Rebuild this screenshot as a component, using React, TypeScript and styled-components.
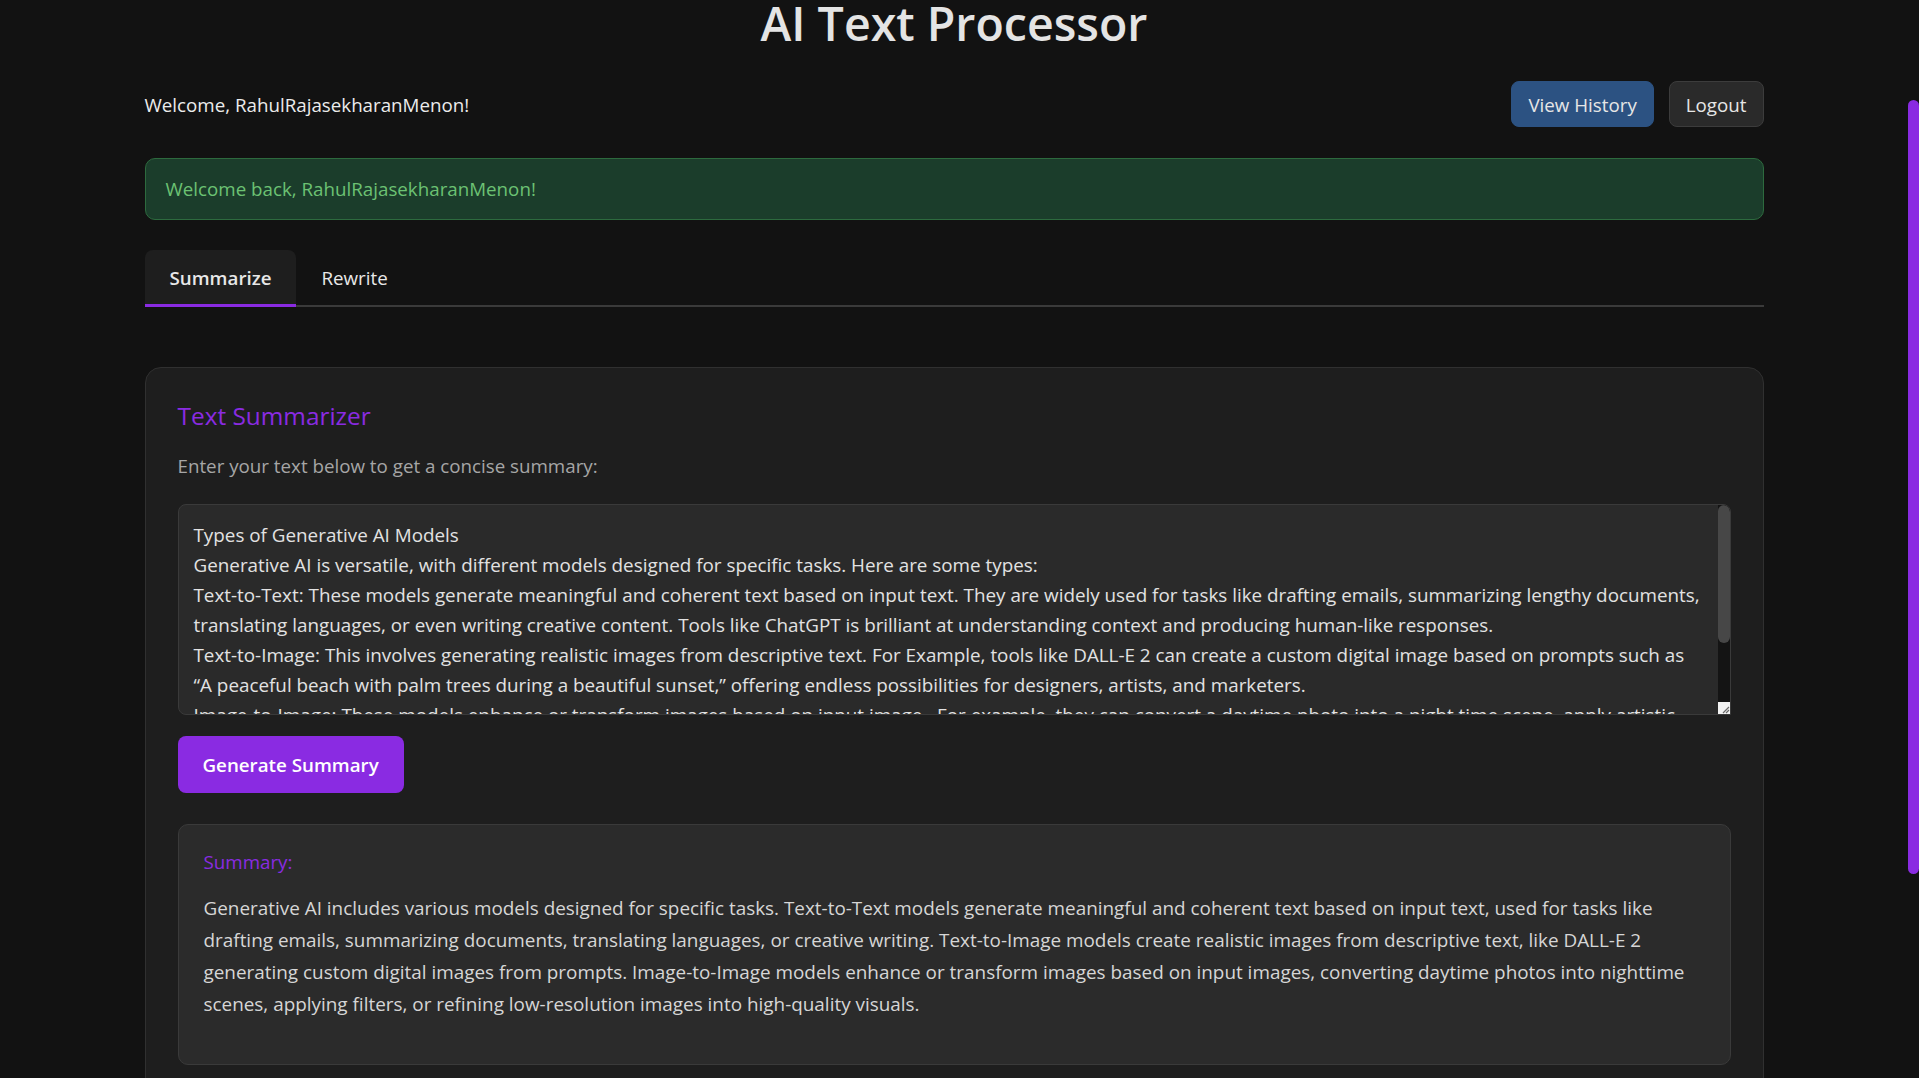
import React, { useEffect, useState } from 'react';
import styled, { createGlobalStyle } from 'styled-components';

const GlobalStyle = createGlobalStyle`
  html, body {
    margin: 0;
    padding: 0;
    background: #121212;
  }

  body {
    font-family: "Open Sans", "Noto Sans", sans-serif;
    font-size: 18.75px;
    color: rgba(255, 255, 255, 0.87);
  }

  * {
    box-sizing: border-box;
  }
`;

const Page = styled.div`
  padding: 136px 11px 264px 0;
`;

// the browser hides real scrollbars, so the page one is drawn over the edge
const PageScrollThumb = styled.div`
  position: fixed;
  top: 100px;
  right: 0;
  width: 11px;
  height: 774px;
  border-radius: 6px;
  background: #8a2be2;
`;

const Container = styled.div`
  max-width: 1619px;
  margin: 0 auto;
`;

const Title = styled.h1`
  margin: 0;
  font-size: 46.5px;
  line-height: 52px;
  font-weight: 600;
  color: #e4e4e4;
  text-align: center;
`;

const Header = styled.header`
  display: flex;
  align-items: center;
  justify-content: space-between;
  margin-top: 32px;
`;

const Greeting = styled.span`
  color: #ececec;
  line-height: 27px;
`;

const HeaderActions = styled.div`
  display: flex;
  gap: 15px;
`;

const HeaderButton = styled.button<{ $primary?: boolean }>`
  height: 46px;
  padding: 0 16px;
  border-radius: 8px;
  border: 1px solid ${({ $primary }) => ($primary ? '#2c5282' : '#3c3c3c')};
  background: ${({ $primary }) => ($primary ? '#2c5282' : '#2a2a2a')};
  color: #e6e6e6;
  font-family: inherit;
  font-size: 18.75px;
  cursor: pointer;
`;

const Alert = styled.div`
  margin-top: 31px;
  padding: 16px 20px;
  line-height: 28px;
  background: #1b3d2b;
  border: 1px solid #2d6a3e;
  border-radius: 10px;
  color: #6cc273;
`;

const TabList = styled.div`
  display: flex;
  margin-top: 30px;
  border-bottom: 2px solid #3a3a3a;
`;

const Tab = styled.button<{ $active: boolean }>`
  height: 57px;
  margin-bottom: -2px;
  padding: 0 25px;
  border: none;
  border-bottom: 3px solid ${({ $active }) => ($active ? '#8a2be2' : 'transparent')};
  border-radius: 8px 8px 0 0;
  background: ${({ $active }) => ($active ? '#1e1e1e' : 'transparent')};
  color: #e8e8e8;
  font-family: inherit;
  font-size: 18.75px;
  font-weight: ${({ $active }) => ($active ? 600 : 500)};
  cursor: pointer;
`;

const Card = styled.section`
  margin-top: 60px;
  padding: 32px;
  background: #1e1e1e;
  border: 1px solid #303030;
  border-radius: 16px;
`;

const CardTitle = styled.h2`
  margin: 0;
  font-size: 24.4px;
  line-height: 32px;
  font-weight: 500;
  color: #8a2be2;
`;

const CardHint = styled.p`
  margin: 20px 0 0;
  line-height: 27px;
  color: #a6a6a6;
`;

const Field = styled.div`
  display: flex;
  height: 211px;
  margin-top: 25px;
  background: #2a2a2a;
  border: 1px solid #3a3a3a;
  border-radius: 8px 8px 0 8px;
  overflow: hidden;
`;

const TextInput = styled.textarea`
  flex: 1;
  height: 100%;
  padding: 15px;
  background: transparent;
  border: none;
  color: #e2e2e2;
  font-family: inherit;
  font-size: 18.83px;
  line-height: 30px;
  resize: none;
  outline: none;
  overflow: hidden;
`;

const ScrollTrack = styled.div`
  display: flex;
  flex-direction: column;
  width: 12px;
  background: #141414;
`;

const ScrollThumb = styled.div`
  height: 138px;
  border-radius: 6px;
  background: #474747;
`;

const ScrollRest = styled.div`
  flex: 1;
`;

const ResizeCorner = styled.div`
  display: flex;
  align-items: flex-end;
  justify-content: flex-end;
  height: 12px;
  background: #f2f2f2;

  svg {
    display: block;
  }
`;

const SubmitButton = styled.button`
  display: block;
  height: 57px;
  margin-top: 21px;
  padding: 0 25px;
  background: #8a2be2;
  border: none;
  border-radius: 8px;
  color: #fff;
  font-family: inherit;
  font-size: 18.75px;
  font-weight: 600;
  cursor: pointer;
`;

const ResultBox = styled.div`
  margin-top: 31px;
  padding: 23px 25px 44px;
  background: #2b2b2b;
  border: 1px solid #3a3a3a;
  border-radius: 10px;
`;

const ResultLabel = styled.h3`
  margin: 0;
  font-size: 18.75px;
  line-height: 27px;
  font-weight: 500;
  color: #8a2be2;
`;

const ResultText = styled.p`
  margin: 17px 0 0;
  font-size: 18.9px;
  line-height: 32px;
  color: #d6d6d6;
`;

const inputText = `Types of Generative AI Models
Generative AI is versatile, with different models designed for specific tasks. Here are some types:
Text-to-Text: These models generate meaningful and coherent text based on input text. They are widely used for tasks like drafting emails, summarizing lengthy documents, translating languages, or even writing creative content. Tools like ChatGPT is brilliant at understanding context and producing human-like responses.
Text-to-Image: This involves generating realistic images from descriptive text. For Example, tools like DALL-E 2 can create a custom digital image based on prompts such as “A peaceful beach with palm trees during a beautiful sunset,” offering endless possibilities for designers, artists, and marketers.
Image-to-Image: These models enhance or transform images based on input image . For example, they can convert a daytime photo into a night time scene, apply artistic filters, or refine low-resolution images into high-quality visuals.`;

const summaryText =
  'Generative AI includes various models designed for specific tasks. Text-to-Text models generate meaningful and coherent text based on input text, used for tasks like drafting emails, summarizing documents, translating languages, or creative writing. Text-to-Image models create realistic images from descriptive text, like DALL-E 2 generating custom digital images from prompts. Image-to-Image models enhance or transform images based on input images, converting daytime photos into nighttime scenes, applying filters, or refining low-resolution images into high-quality visuals.';

export default function App() {
  const [tab, setTab] = useState<'summarize' | 'rewrite'>('summarize');
  const [text, setText] = useState(inputText);

  useEffect(() => {
    window.scrollTo(0, 139);
  }, []);

  return (
    <Page>
      <GlobalStyle />
      <PageScrollThumb />
      <Container>
        <Title>AI Text Processor</Title>

        <Header>
          <Greeting>Welcome, RahulRajasekharanMenon!</Greeting>
          <HeaderActions>
            <HeaderButton $primary>View History</HeaderButton>
            <HeaderButton>Logout</HeaderButton>
          </HeaderActions>
        </Header>

        <Alert>Welcome back, RahulRajasekharanMenon!</Alert>

        <TabList>
          <Tab $active={tab === 'summarize'} onClick={() => setTab('summarize')}>
            Summarize
          </Tab>
          <Tab $active={tab === 'rewrite'} onClick={() => setTab('rewrite')}>
            Rewrite
          </Tab>
        </TabList>

        <Card>
          <CardTitle>Text Summarizer</CardTitle>
          <CardHint>Enter your text below to get a concise summary:</CardHint>
          <Field>
            <TextInput value={text} onChange={(e) => setText(e.target.value)} />
            <ScrollTrack>
              <ScrollThumb />
              <ScrollRest />
              <ResizeCorner>
                <svg width="10" height="10" viewBox="0 0 10 10">
                  <path d="M9 3 L3 9 M9 6 L6 9" stroke="#6a6a6a" strokeWidth="1.2" />
                </svg>
              </ResizeCorner>
            </ScrollTrack>
          </Field>
          <SubmitButton>Generate Summary</SubmitButton>

          <ResultBox>
            <ResultLabel>Summary:</ResultLabel>
            <ResultText>{summaryText}</ResultText>
          </ResultBox>
        </Card>
      </Container>
    </Page>
  );
}
